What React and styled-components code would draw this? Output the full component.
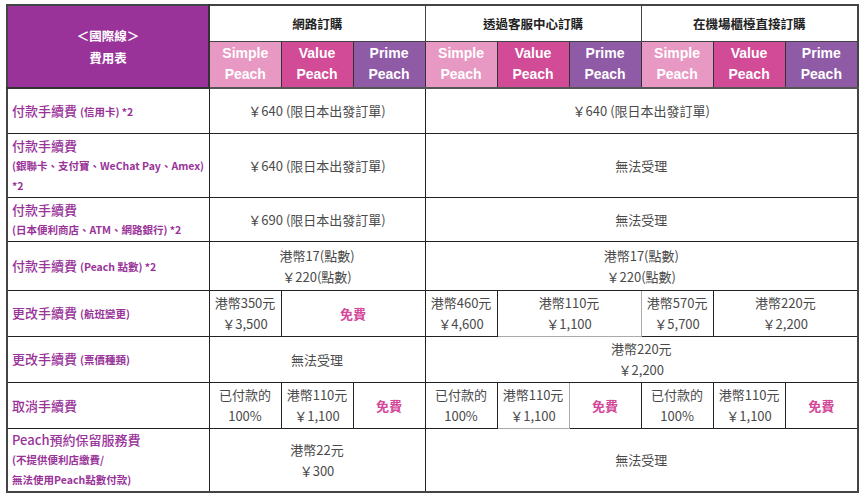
import React from "react";
import styled, { createGlobalStyle } from "styled-components";

const GlobalStyle = createGlobalStyle`
  body {
    margin: 0;
    background: #fff;
    font-family: "Noto Sans CJK TC", "Noto Sans", sans-serif;
  }
`;

const Page = styled.div`
  padding: 4px 0 0 6px;
`;

const Table = styled.table`
  border-collapse: collapse;
  table-layout: fixed;
  width: 851px;
  border: 2px solid #444;
`;

const Row = styled.tr`
  height: ${(p) => p.$h}px;
`;

const Corner = styled.th`
  background: #993399;
  color: #fff;
  font-size: 12.5px;
  font-weight: 700;
  line-height: 22px;
  border: 1px solid #333;
  border-right: 2px solid #333;
  border-bottom: 2px solid #333;
`;

const Channel = styled.th`
  background: #fff;
  color: #222;
  font-size: 12.5px;
  font-weight: 700;
  border: 1px solid #444;
`;

const planColors = {
  simple: "#e899c3",
  value: "#d14b96",
  prime: "#8f5ba6",
};

const Plan = styled.th`
  background: ${(p) => planColors[p.$plan]};
  color: #fff;
  font-family: "Liberation Sans", "Noto Sans CJK TC", sans-serif;
  font-size: 14px;
  font-weight: 700;
  line-height: 21px;
  border: 1px solid #333;
  border-bottom: 2px solid #555;
`;

const Label = styled.td`
  color: #993399;
  font-size: 13px;
  font-weight: 500;
  line-height: 19px;
  padding: 0 2px 0 4px;
  border: 1px solid #222;
  vertical-align: middle;
`;

const Note = styled.span`
  font-size: 10.5px;
  font-weight: 700;
`;

const Cell = styled.td`
  color: #4a4a4a;
  font-size: 13px;
  line-height: 21px;
  text-align: center;
  vertical-align: middle;
  padding: 0;
  border: 1px solid ${(p) => (p.$light ? "#aaa" : "#222")};
`;

const Free = styled.span`
  color: #d4489a;
  font-weight: 700;
`;

const Two = ({ a, b }) => (
  <>
    {a}
    <br />
    {b}
  </>
);

const plans = ["simple", "value", "prime"];
const planNames = { simple: "Simple", value: "Value", prime: "Prime" };

export default function App() {
  return (
    <Page>
      <GlobalStyle />
      <Table>
        <colgroup>
          <col style={{ width: 202 }} />
          {Array.from({ length: 9 }).map((_, i) => (
            <col key={i} style={{ width: i === 8 ? 73 : 72 }} />
          ))}
        </colgroup>
        <thead>
          <Row $h={36}>
            <Corner rowSpan={2}>
              ＜國際線＞
              <br />
              費用表
            </Corner>
            <Channel colSpan={3}>網路訂購</Channel>
            <Channel colSpan={3}>透過客服中心訂購</Channel>
            <Channel colSpan={3}>在機場櫃檯直接訂購</Channel>
          </Row>
          <Row $h={47}>
            {[0, 1, 2].map((g) =>
              plans.map((p) => (
                <Plan key={g + p} $plan={p}>
                  {planNames[p]}
                  <br />
                  Peach
                </Plan>
              ))
            )}
          </Row>
        </thead>
        <tbody>
          <Row $h={45}>
            <Label>
              付款手續費 <Note>(信用卡) *2</Note>
            </Label>
            <Cell colSpan={3}>￥640 (限日本出發訂單)</Cell>
            <Cell colSpan={6}>￥640 (限日本出發訂單)</Cell>
          </Row>
          <Row $h={64}>
            <Label>
              付款手續費
              <br />
              <Note>
                (銀聯卡、支付寶、WeChat Pay、Amex)
                <br />
                *2
              </Note>
            </Label>
            <Cell colSpan={3}>￥640 (限日本出發訂單)</Cell>
            <Cell colSpan={6}>無法受理</Cell>
          </Row>
          <Row $h={44}>
            <Label>
              付款手續費
              <br />
              <Note>(日本便利商店、ATM、網路銀行) *2</Note>
            </Label>
            <Cell colSpan={3}>￥690 (限日本出發訂單)</Cell>
            <Cell colSpan={6}>無法受理</Cell>
          </Row>
          <Row $h={49}>
            <Label>
              付款手續費 <Note>(Peach 點數) *2</Note>
            </Label>
            <Cell colSpan={3}>
              <Two a="港幣17(點數)" b="￥220(點數)" />
            </Cell>
            <Cell colSpan={6}>
              <Two a="港幣17(點數)" b="￥220(點數)" />
            </Cell>
          </Row>
          <Row $h={46}>
            <Label>
              更改手續費 <Note>(航班變更)</Note>
            </Label>
            <Cell>
              <Two a="港幣350元" b="￥3,500" />
            </Cell>
            <Cell colSpan={2}>
              <Free>免費</Free>
            </Cell>
            <Cell>
              <Two a="港幣460元" b="￥4,600" />
            </Cell>
            <Cell colSpan={2} $light>
              <Two a="港幣110元" b="￥1,100" />
            </Cell>
            <Cell>
              <Two a="港幣570元" b="￥5,700" />
            </Cell>
            <Cell colSpan={2}>
              <Two a="港幣220元" b="￥2,200" />
            </Cell>
          </Row>
          <Row $h={46}>
            <Label>
              更改手續費 <Note>(票價種類)</Note>
            </Label>
            <Cell colSpan={3}>無法受理</Cell>
            <Cell colSpan={6}>
              <Two a="港幣220元" b="￥2,200" />
            </Cell>
          </Row>
          <Row $h={46}>
            <Label>取消手續費</Label>
            {[0, 1, 2].map((g) => (
              <React.Fragment key={g}>
                <Cell>
                  <Two a="已付款的" b="100%" />
                </Cell>
                <Cell $light={g === 1}>
                  <Two a="港幣110元" b="￥1,100" />
                </Cell>
                <Cell>
                  <Free>免費</Free>
                </Cell>
              </React.Fragment>
            ))}
          </Row>
          <Row $h={64}>
            <Label>
              Peach預約保留服務費
              <br />
              <Note>
                (不提供便利店繳費/
                <br />
                無法使用Peach點數付款)
              </Note>
            </Label>
            <Cell colSpan={3}>
              <Two a="港幣22元" b="￥300" />
            </Cell>
            <Cell colSpan={6}>無法受理</Cell>
          </Row>
        </tbody>
      </Table>
    </Page>
  );
}
